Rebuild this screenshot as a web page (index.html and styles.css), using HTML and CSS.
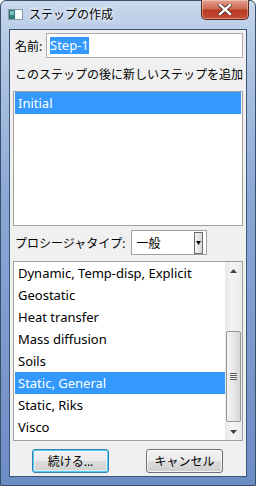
FILE: index.html
```html
<!DOCTYPE html>
<html lang="ja">
<head>
  <meta charset="UTF-8" />
  <title>ステップの作成</title>
  <link rel="stylesheet" href="styles.css">
</head>
<body>

  <div class="window">
    <!-- Title bar -->
    <div class="titlebar">
      <svg class="app-icon" width="15" height="11" viewBox="0 0 15 11">
        <rect x="0.5" y="0.5" width="14" height="10" fill="#f4f6f8" stroke="#8c9aa8"/>
        <rect x="1" y="1" width="6" height="9" fill="#2f7d7a"/>
        <rect x="2" y="2" width="4" height="4" fill="#7fc1b8"/>
        <rect x="8" y="2" width="5" height="7" fill="#ffffff"/>
      </svg>
      <span class="title">ステップの作成</span>
      <div class="close-btn">
        <svg width="14" height="11" viewBox="0 0 14 11">
          <path d="M2 1 L12 10 M12 1 L2 10" stroke="#4a2a24" stroke-width="4.2" stroke-linecap="square"/>
          <path d="M2 1 L12 10 M12 1 L2 10" stroke="#ffffff" stroke-width="2.4" stroke-linecap="square"/>
        </svg>
      </div>
    </div>

    <!-- Client area -->
    <div class="client">
      <div class="name-row">
        <label>名前:</label>
        <div class="textbox"><span class="selected-text">Step-1</span></div>
      </div>

      <div class="caption">このステップの後に新しいステップを追加</div>

      <div class="listbox steps">
        <div class="item selected">Initial</div>
      </div>

      <div class="type-row">
        <label>プロシージャタイプ:</label>
        <div class="combo">
          <span>一般</span>
          <div class="combo-btn">
            <svg width="5" height="4" viewBox="0 0 5 4"><path d="M0 0 H5 L2.5 4 Z" fill="#000"/></svg>
          </div>
        </div>
      </div>

      <div class="listbox procs">
        <div class="items" id="procList"></div>
        <div class="scrollbar">
          <div class="sb-arrow">
            <svg width="7" height="4" viewBox="0 0 7 4"><path d="M0 4 H7 L3.5 0 Z" fill="#404040"/></svg>
          </div>
          <div class="sb-track">
            <div class="sb-thumb">
              <div class="grip"></div>
            </div>
          </div>
          <div class="sb-arrow">
            <svg width="7" height="4" viewBox="0 0 7 4"><path d="M0 0 H7 L3.5 4 Z" fill="#404040"/></svg>
          </div>
        </div>
      </div>

      <div class="buttons">
        <button class="btn default">続ける...</button>
        <button class="btn">キャンセル</button>
      </div>
    </div>
  </div>

  <script>
    const procedures = [
      "Dynamic, Temp-disp, Explicit",
      "Geostatic",
      "Heat transfer",
      "Mass diffusion",
      "Soils",
      "Static, General",
      "Static, Riks",
      "Visco"
    ];

    const list = document.getElementById("procList");
    procedures.forEach(name => {
      const row = document.createElement("div");
      row.classList.add("item");
      if (name === "Static, General") row.classList.add("selected");
      row.textContent = name;
      list.appendChild(row);
    });
  </script>

</body>
</html>
```

FILE: styles.css
```css
body {
  margin: 0;
  font-family: "Noto Sans", "Noto Sans CJK JP", sans-serif;
  font-size: 12px;
  color: #000;
}
.window {
  width: 256px;
  height: 486px;
  box-sizing: border-box;
  padding: 0 8px 8px 8px;
  background: linear-gradient(to bottom, #c9d9ed 0, #b4c9e4 40px, #8aa7d5 200px, #6c8dc4 486px);
  border: 1px solid #3a4f6e;
  border-radius: 6px 6px 0 0;
  display: flex;
  flex-direction: column;
}
.titlebar {
  height: 28px;
  display: flex;
  align-items: center;
  position: relative;
  margin-left: -1px;
}
.app-icon {
  margin-top: -2px;
}
.title {
  margin-left: 6px;
  margin-top: -2px;
  font-size: 12px;
  text-shadow: 0 0 6px #fff, 0 0 3px #fff;
}
.close-btn {
  position: absolute;
  right: -2px;
  top: -1px;
  width: 46px;
  height: 19px;
  border: 1px solid #5a2a22;
  border-top: none;
  border-radius: 0 0 5px 5px;
  background: linear-gradient(to bottom, #e3a08f 0, #cf6a55 45%, #b83a22 55%, #c44e33 100%);
  box-shadow: inset 0 0 0 1px rgba(255,255,255,0.35);
  display: flex;
  align-items: center;
  justify-content: center;
}
.client {
  flex: 1;
  background: #f0f0f0;
  border: 1px solid #3c5577;
  padding: 3px 3px 0 3px;
  display: flex;
  flex-direction: column;
}
.name-row, .type-row {
  display: flex;
  align-items: center;
}
.name-row label, .type-row label {
  padding-left: 2px;
}
.textbox {
  margin-left: auto;
  width: 197px;
  height: 25px;
  box-sizing: border-box;
  background: #fff;
  border: 1px solid #abadb3;
  padding: 3px 3px;
  display: flex;
  align-items: center;
  font-size: 13px;
}
.selected-text {
  background: #3399ff;
  color: #fff;
  line-height: 17px;
}
.caption {
  margin-top: 9px;
  padding-left: 2px;
  line-height: 16px;
}
.listbox {
  background: #fff;
  border: 1px solid #a0a0a0;
  box-sizing: border-box;
}
.steps {
  margin-top: 8px;
  height: 135px;
  padding: 0 1px;
}
.item {
  height: 22px;
  line-height: 22px;
  padding-left: 3px;
  white-space: nowrap;
  font-size: 13px;
}
.item.selected {
  background: #3399ff;
  color: #fff;
}
.type-row {
  margin-top: 4px;
}
.combo {
  margin-left: 6px;
  width: 76px;
  height: 25px;
  box-sizing: border-box;
  background: #fff;
  border: 1px solid #a0a0a0;
  display: flex;
  align-items: center;
  padding: 1px 1px 1px 4px;
}
.combo span {
  flex: 1;
}
.combo-btn {
  width: 7px;
  height: 20px;
  border: 1px solid #6a6a6a;
  background: linear-gradient(to right, #f4f4f4, #d8d8d8);
  display: flex;
  align-items: center;
  justify-content: center;
  margin-right: 2px;
}
.procs {
  margin-top: 6px;
  height: 180px;
  display: flex;
  padding-left: 1px;
}
.items {
  flex: 1;
}
.scrollbar {
  width: 17px;
  display: flex;
  flex-direction: column;
  background: linear-gradient(to right, #e8e8e8, #f4f4f4 40%, #eaeaea);
}
.sb-arrow {
  height: 17px;
  display: flex;
  align-items: center;
  justify-content: center;
}
.sb-track {
  flex: 1;
  display: flex;
  flex-direction: column;
  justify-content: flex-end;
  padding-bottom: 1px;
}
.sb-thumb {
  height: 91px;
  margin: 0 1px;
  border: 1px solid #979797;
  border-radius: 2px;
  box-sizing: border-box;
  background: linear-gradient(to right, #f3f3f3, #e8e8e8 50%, #d6d6d6);
  display: flex;
  align-items: center;
  justify-content: center;
}
.grip {
  width: 7px;
  height: 7px;
  background: repeating-linear-gradient(to bottom, #5a5a5a 0, #5a5a5a 1px, #f0f0f0 1px, #f0f0f0 2px);
}
.buttons {
  display: flex;
  justify-content: space-between;
  padding: 8px 20px 0 19px;
}
.btn {
  font-family: "Noto Sans", "Noto Sans CJK JP", sans-serif;
  font-size: 12px;
  height: 24px;
  width: 77px;
  padding: 0;
  border: 1px solid #707070;
  border-radius: 3px;
  background: linear-gradient(to bottom, #f2f2f2 0, #ebebeb 50%, #dddddd 50%, #cfcfcf 100%);
  box-shadow: inset 0 0 0 1px rgba(255,255,255,0.7);
  color: #000;
}
.btn.default {
  border-color: #3c7fb1;
  box-shadow: inset 0 0 0 1px #48d0f4, inset 0 0 0 2px rgba(255,255,255,0.5);
}
```
